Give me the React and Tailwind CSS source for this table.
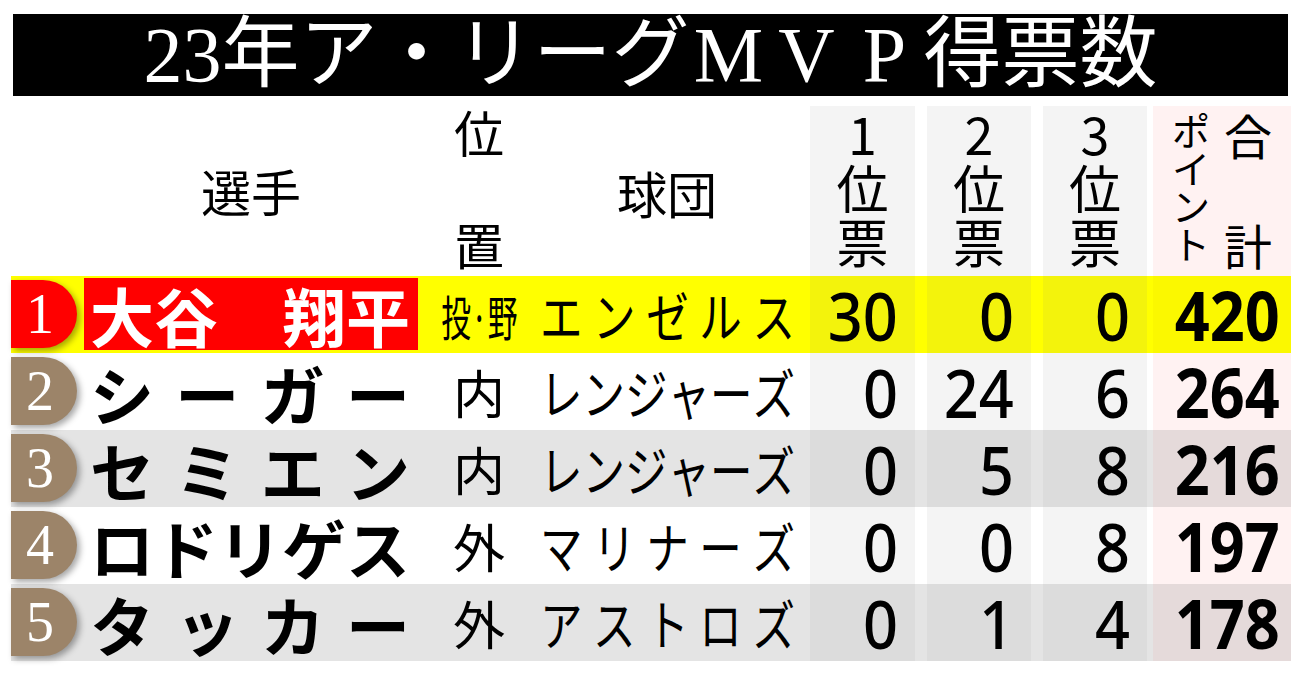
const rows = [
  { rank: 1, name: ["大", "谷", "　", "翔", "平"], pos: "投·野", team: "エンゼルス", v: [30, 0, 0], pts: 420, kind: "top" },
  { rank: 2, name: ["シ", "ー", "ガ", "ー"], pos: "内", team: "レンジャーズ", v: [0, 24, 6], pts: 264, kind: "white" },
  { rank: 3, name: ["セ", "ミ", "エ", "ン"], pos: "内", team: "レンジャーズ", v: [0, 5, 8], pts: 216, kind: "grey" },
  { rank: 4, name: ["ロ", "ド", "リ", "ゲ", "ス"], pos: "外", team: "マリナーズ", v: [0, 0, 8], pts: 197, kind: "white" },
  { rank: 5, name: ["タ", "ッ", "カ", "ー"], pos: "外", team: "アストロズ", v: [0, 1, 4], pts: 178, kind: "grey" },
];

const theme = {
  top: { row: "bg-[#ffff00]", num: "bg-[#f3f30c]", pts: "bg-[#fbf800]", badge: "bg-[#ff0000]" },
  white: { row: "bg-white", num: "bg-[#f4f4f4]", pts: "bg-[#fff2f2]", badge: "bg-[#9c8469]" },
  grey: { row: "bg-[#e4e4e4]", num: "bg-[#dcdcdc]", pts: "bg-[#e5dada]", badge: "bg-[#9c8469]" },
};

const NumCell = ({ value, bg, width }) => (
  <div className={`${width} ${bg} flex items-center justify-end pr-[17px]`}>
    <span className="inline-block origin-right scale-x-[0.9] font-['Noto_Sans',sans-serif] text-[68px] font-medium leading-none">
      {value}
    </span>
  </div>
);

const Row = ({ r }) => {
  const t = theme[r.kind];
  const top = r.kind === "top";
  return (
    <div className={`flex h-[77px] ${t.row}`}>
      <div className="w-[73px]">
        <div
          className={`mt-[4px] flex h-[68px] w-[66px] items-center justify-center rounded-r-full pr-[8px] font-['Liberation_Serif',serif] text-[56px] leading-none text-white shadow-[3px_3px_6px_rgba(0,0,0,0.35)] ${t.badge}`}
        >
          {r.rank}
        </div>
      </div>
      <div className="w-[334px]">
        <div
          className={`flex h-[72px] items-center pl-[6px] ${top ? "mt-[2px] bg-[#ff0000] text-white" : "h-full text-black"}`}
        >
          <div className="flex w-[320px] justify-between text-[64px] font-bold leading-none">
            {r.name.map((c, i) => (
              <span key={i}>{c}</span>
            ))}
          </div>
        </div>
      </div>
      <div className="flex w-[122px] items-center justify-center whitespace-nowrap text-[52px] leading-none">
        {r.pos.length > 1 ? (
          <span className="inline-block scale-x-[0.62] whitespace-nowrap text-[48px]">{r.pos}</span>
        ) : (
          r.pos
        )}
      </div>
      <div className="flex w-[270px] items-center">
        <div className="flex w-[324px] shrink-0 origin-left scale-x-[0.787] justify-between text-[54px] leading-none">
          {r.team.split("").map((c, i) => (
            <span key={i}>{c}</span>
          ))}
        </div>
      </div>
      <NumCell value={r.v[0]} bg={t.num} width="w-[105px]" />
      <div className="w-[12px]" />
      <NumCell value={r.v[1]} bg={t.num} width="w-[104px]" />
      <div className="w-[12px]" />
      <NumCell value={r.v[2]} bg={t.num} width="w-[104px]" />
      <div className="w-[6px]" />
      <div className={`flex w-[138px] items-center justify-end pr-[11px] ${t.pts}`}>
        <span className="inline-block origin-right scale-x-[0.9] font-['Noto_Sans',sans-serif] text-[68px] font-bold leading-none">
          {r.pts}
        </span>
      </div>
    </div>
  );
};

const VoteHead = ({ n, width }) => (
  <div className={`${width} mt-[10px] flex flex-col items-center bg-[#f4f4f4] text-[52px] leading-[54px]`}>
    <span>{n}</span>
    <span>位</span>
    <span>票</span>
  </div>
);

export default function App() {
  return (
    <div className="h-[684px] w-[1300px] overflow-hidden bg-white pt-[14px] font-['Noto_Sans_CJK_JP',sans-serif] text-black">
      <div className="ml-[13px] flex h-[82px] w-[1275px] items-center justify-center bg-black font-['Liberation_Serif','Noto_Sans_CJK_JP',serif] text-[78px] leading-none text-white">
        <span>23年ア・リーグ</span>
        {["M", "V", "P"].map((c) => (
          <span key={c} className="inline-block w-[1em] text-center">
            {c}
          </span>
        ))}
        <span>得票数</span>
      </div>

      <div className="ml-[11px] w-[1280px]">
        <div className="flex h-[180px]">
          <div className="w-[73px]" />
          <div className="flex w-[334px] items-center justify-center pt-[8px] text-[50px] leading-none">選手</div>
          <div className="flex w-[122px] flex-col items-center justify-between pb-[8px] pt-[10px] text-[50px] leading-none">
            <span>位</span>
            <span>置</span>
          </div>
          <div className="flex w-[270px] items-center justify-center pr-[16px] pt-[12px] text-[50px] leading-none">球団</div>
          <VoteHead n="1" width="w-[105px]" />
          <div className="w-[12px]" />
          <VoteHead n="2" width="w-[104px]" />
          <div className="w-[12px]" />
          <VoteHead n="3" width="w-[104px]" />
          <div className="w-[6px]" />
          <div className="mt-[10px] flex w-[138px] justify-center gap-[14px] bg-[#fff2f2] pb-[8px] pt-[4px]">
            <div className="flex flex-col text-[38px] leading-[38px]">
              <span>ポ</span>
              <span>イ</span>
              <span>ン</span>
              <span>ト</span>
            </div>
            <div className="flex flex-col justify-between text-[48px] leading-none">
              <span>合</span>
              <span>計</span>
            </div>
          </div>
        </div>
        {rows.map((r) => (
          <Row key={r.rank} r={r} />
        ))}
      </div>
    </div>
  );
}
